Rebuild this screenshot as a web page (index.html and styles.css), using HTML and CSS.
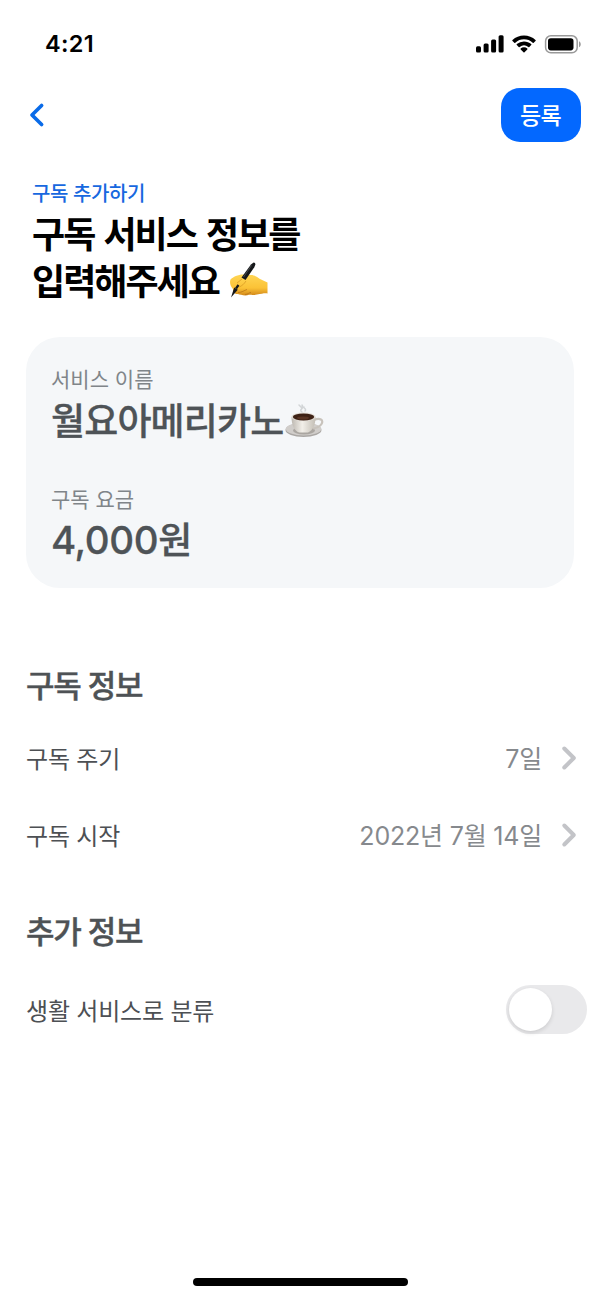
FILE: index.html
```html
<!DOCTYPE html>
<html lang="ko">
<head>
<meta charset="utf-8">
<title>구독 추가하기</title>
<link rel="stylesheet" href="styles.css">
</head>
<body>
<main class="screen">
  <div class="status">
    <span class="time">4:21</span>
    <div class="status-icons">
      <svg width="28" height="18" viewBox="0 0 28 18"><rect x="0" y="11.2" width="5" height="6.2" rx="1.5"/><rect x="7.6" y="8.6" width="5" height="8.8" rx="1.5"/><rect x="15.1" y="4.6" width="5" height="12.8" rx="1.5"/><rect x="22.6" y="0.2" width="5" height="17.2" rx="1.5"/></svg>
      <svg width="24" height="18" viewBox="0 0 24 18"><path d="M12 0.4c4.400 0 8.500 1.700 11.500 4.500q.5.5 0 1l-1.800 1.800q-.5.4-1 0A12.800 12.800 0 0 0 3.300 7.700q-.5.4-1 0L.5 5.900q-.5-.5 0-1C3.500 2.100 7.600.4 12 .4z"/><path d="M12 6.400c2.800 0 5.300 1 7.200 2.700q.5.500 0 1l-1.900 1.900q-.5.400-1 0a6.700 6.700 0 0 0-8.600 0q-.5.400-1 0L4.800 10.100q-.5-.5 0-1A10.800 10.800 0 0 1 12 6.400z"/><path d="M12 12.300c1.300 0 2.400.4 3.300 1.100q.5.500 0 1l-2.800 2.900q-.5.500-1 0l-2.800-2.900q-.5-.5 0-1c.9-.7 2-1.100 3.300-1.100z"/></svg>
      <svg width="37" height="19" viewBox="0 0 37 19"><rect x="1.600" y=".8" width="31.600" height="17" rx="5.300" fill="none" stroke="#999" stroke-width="1.500"/><rect x="4" y="3.200" width="25.500" height="12.200" rx="2.800"/><path d="M35 6.300c2.300.8 2.300 5.200 0 6z" fill="#999"/></svg>
    </div>
  </div>
  <header class="nav">
    <svg class="back" width="16" height="26" viewBox="0 0 16 26"><path d="M12.600 3.500L3 13L12.600 22.500"/></svg>
    <button class="submit">등록</button>
  </header>
  <section class="intro">
    <p class="eyebrow">구독 추가하기</p>
    <h1 class="title">구독 서비스 정보를<br>입력해주세요
      <svg class="hand" width="40" height="38" viewBox="0 0 40 38">
        <defs><linearGradient id="skin" gradientUnits="userSpaceOnUse" x1="0" y1="11" x2="0" y2="34"><stop offset="0" stop-color="#ffd858"/><stop offset=".65" stop-color="#fbc236"/><stop offset="1" stop-color="#cf8418"/></linearGradient></defs>
        <path fill="url(#skin)" d="M1.500 17.500C4 15 9 12.500 14 12.500L21 13C25 12.500 28 15 31 17L38.500 20.500V31.500C35 31 33 32 28 32.500C25 33.500 21 32.500 20 32.800C16 34.500 11 32.500 9 32C5 32 4 30 4 27C1 24 .5 20 1.500 17.500z"/>
        <path fill="none" stroke="#b97518" stroke-width=".8" d="M9 30.500c4 0 6-2 9-3M16 32.500c3 0 4-2 6-2"/>
        <path fill="#16181a" d="M22 2.500L24.600.6q2 .1 1.800 2L25.300 5.200 16.500 18l-4-2.600z"/>
        <path fill="#16181a" d="M5.200 25.500l3.600 2.300L2 35.600z"/>
        <path stroke="#16181a" stroke-width="2.200" d="M7 26.500l2.500-3.500"/>
        <path stroke="#5b6063" stroke-width=".7" d="M14.500 15l8-11.500"/>
        <path fill="none" stroke="#dda027" stroke-width=".9" d="M8 21c2-1 3-3 5-4M10 25c3-1 5-3 7-6"/>
      </svg></h1>
  </section>
  <section class="card">
    <p class="label">서비스 이름</p>
    <p class="value name"><span>월요아메리카노</span><svg class="coffee" width="39" height="36" viewBox="0 0 39 36">
        <defs><linearGradient id="cup" x1="0" x2="1"><stop offset="0" stop-color="#bdb8b1"/><stop offset=".45" stop-color="#f2efe9"/><stop offset="1" stop-color="#c3beb5"/></linearGradient></defs>
        <ellipse cx="18.500" cy="27" rx="18" ry="7" fill="#aaa7a4"/><ellipse cx="18.500" cy="26" rx="17.700" ry="6.400" fill="#d0cdca"/>
        <ellipse cx="19" cy="27.500" rx="11" ry="4" fill="#aaa6a1"/>
        <path d="M29 17c6-2.500 10 0 7.500 4-1.500 2.500-5 4-8.500 4.500" fill="none" stroke="#c8c3bc" stroke-width="2.200"/>
        <path d="M6.500 14c0 8 3 14.500 8 15.500h8.500c5-2 7.500-8 7.500-15.500z" fill="url(#cup)"/>
        <ellipse cx="18.500" cy="13.700" rx="12" ry="4.300" fill="#e3ded7"/><ellipse cx="18.500" cy="14" rx="10.700" ry="3.400" fill="#3d2115"/><ellipse cx="18" cy="15" rx="6" ry="1.600" fill="#583424"/>
        <path d="M17 9c-4-3 3-3 0-7m-3 0l3 3m3 3c2-2-2-3-1-4" fill="none" stroke="#d2d5d7" stroke-width="1.500" stroke-linecap="round"/>
      </svg></p>
    <p class="label fee">구독 요금</p>
    <p class="value price"><span class="num">4,000</span>원</p>
  </section>
  <section class="group">
    <h2>구독 정보</h2>
    <div class="row cycle"><span>구독 주기</span><span class="detail">7일</span><svg class="chevron" width="17" height="26" viewBox="0 0 17 26"><path d="M3.300 3.500L12.800 13L3.300 22.500"/></svg></div>
    <div class="row"><span>구독 시작</span><span class="detail">2022년 7월 14일</span><svg class="chevron" width="17" height="26" viewBox="0 0 17 26"><path d="M3.300 3.500L12.800 13L3.300 22.500"/></svg></div>
  </section>
  <section class="group extra">
    <h2>추가 정보</h2>
    <div class="row option"><span>생활 서비스로 분류</span><span class="toggle"><i class="knob"></i></span></div>
  </section>
  <div class="home"></div>
</main>
</body>
</html>
```
FILE: styles.css
```css
* { box-sizing: border-box; }
body, p, h1, h2 { margin: 0; }
body { background: #fff; font-family: Inter, "Noto Sans CJK KR", sans-serif; }
.screen { width: 600px; height: 1299px; display: flex; flex-direction: column; overflow: hidden; }
.status { height: 88px; padding: 0 19px 0 45px; display: flex; align-items: center; justify-content: space-between; }
.time { font-size: 23.500px; font-weight: 600; line-height: 30px; letter-spacing: .35px; }
.status-icons { display: flex; align-items: center; gap: 8px; }
.nav { height: 54px; padding: 0 19px 0 29px; display: flex; align-items: center; justify-content: space-between; }
.back { fill: none; stroke: #0a6be8; stroke-width: 3.700; stroke-linecap: round; stroke-linejoin: round; }
.submit { width: 80px; height: 54px; padding: 0 1px 2px 0; border: 0; border-radius: 19px; background: #0368ff; color: #fff; font: 500 23px/30px "Noto Sans CJK KR", sans-serif; letter-spacing: -.7px; }
.intro { padding: 39px 32px 0; }
.eyebrow { color: #1768df; font-size: 20px; font-weight: 500; line-height: 26px; letter-spacing: -.4px; }
.title { font-size: 36px; line-height: 47px; font-weight: 700; letter-spacing: -1.950px; word-spacing: 2.500px; margin-top: 5px; }
.hand { vertical-align: -5px; margin-left: 1px; }
.card { flex: none; margin: 31px 26px 0; height: 251px; border-radius: 34px; background: #f5f7f9; padding: 29px 25px 0; }
.label { color: #808589; font-size: 21px; line-height: 28px; letter-spacing: 0; }
.value { color: #4e5357; font-size: 37px; font-weight: 500; line-height: 52px; height: 52px; letter-spacing: -.85px; -webkit-text-stroke: .3px #4e5357; }
.name { display: flex; align-items: center; padding-top: 4px; }
.coffee { margin: -3px 0 0 2px; }
.fee { margin-top: 40px; }
.price { padding-top: 0; }
.num { font-size: 38.500px; letter-spacing: -.4px; }
.group { padding: 76px 22px 0 26px; }
.group h2 { font-size: 31px; line-height: 44px; font-weight: 500; color: #4e5255; letter-spacing: -1.200px; -webkit-text-stroke: .4px #4e5255; }
.row { height: 77px; display: flex; align-items: center; font-size: 24px; letter-spacing: -.2px; color: #4d5054; }
.cycle { margin-top: 11px; }
.detail { margin-left: auto; padding-bottom: 2px; font-size: 25px; color: #86898d; }
.chevron { margin-left: 19px; fill: none; stroke: #c3c4c8; stroke-width: 4; stroke-linecap: round; stroke-linejoin: round; }
.extra { padding: 37px 13px 0 26px; }
.option { margin-top: 17px; }
.toggle { width: 81px; height: 49px; margin-left: auto; border-radius: 25px; background: #e9e9eb; padding: 3px; }
.knob { display: block; width: 43px; height: 43px; border-radius: 50%; background: #fff; box-shadow: 0 2px 4px rgba(0,0,0,.12); }
.home { width: 215px; height: 8px; border-radius: 4px; background: #000; margin: auto auto 13px; }
```
